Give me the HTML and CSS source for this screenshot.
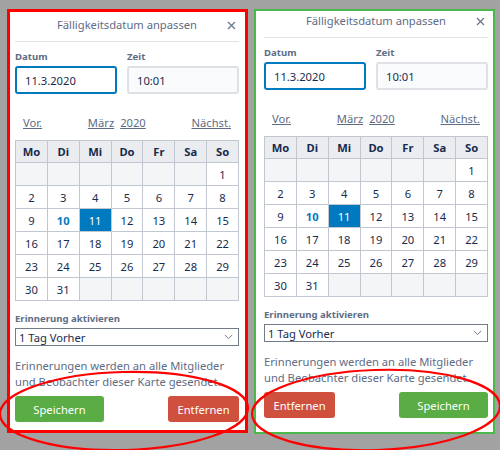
FILE: index.html
```html
<!DOCTYPE html>
<html lang="de">
<head>
<meta charset="utf-8">
<title>Fälligkeitsdatum anpassen</title>
<link rel="stylesheet" href="styles.css">
</head>
<body>
<div class="stage">
  <section class="pop pop-red">
    <header class="pop-head">
      <span class="pop-title">Fälligkeitsdatum anpassen</span>
      <span class="pop-close"><svg width="9" height="9" viewBox="0 0 9 9"><path d="M1 1L8 8M8 1L1 8" stroke="#6b778c" stroke-width="1.3" fill="none"/></svg></span>
    </header>
    <div class="dt">
      <div class="field"><div class="lbl">Datum</div><div class="inp inp-focus">11.3.2020</div></div>
      <div class="field"><div class="lbl">Zeit</div><div class="inp">10:01</div></div>
    </div>
    <div class="cal-nav"><span class="lnk">Vor.</span><span class="mid"><span class="lnk">März</span><span class="lnk">2020</span></span><span class="lnk">Nächst.</span></div>
    <div class="cal">
      <div class="c hd">Mo</div><div class="c hd">Di</div><div class="c hd">Mi</div><div class="c hd">Do</div><div class="c hd">Fr</div><div class="c hd">Sa</div><div class="c hd">So</div>
      <div class="c empty"></div><div class="c empty"></div><div class="c empty"></div><div class="c empty"></div><div class="c empty"></div><div class="c empty"></div><div class="c">1</div>
      <div class="c">2</div><div class="c">3</div><div class="c">4</div><div class="c">5</div><div class="c">6</div><div class="c">7</div><div class="c">8</div>
      <div class="c">9</div><div class="c today">10</div><div class="c picked">11</div><div class="c">12</div><div class="c">13</div><div class="c">14</div><div class="c">15</div>
      <div class="c">16</div><div class="c">17</div><div class="c">18</div><div class="c">19</div><div class="c">20</div><div class="c">21</div><div class="c">22</div>
      <div class="c">23</div><div class="c">24</div><div class="c">25</div><div class="c">26</div><div class="c">27</div><div class="c">28</div><div class="c">29</div>
      <div class="c">30</div><div class="c">31</div><div class="c empty"></div><div class="c empty"></div><div class="c empty"></div><div class="c empty"></div><div class="c empty"></div>
    </div>
    <div class="lbl rem-lbl">Erinnerung aktivieren</div>
    <div class="select"><span>1 Tag Vorher</span><svg width="9" height="6" viewBox="0 0 9 6"><path d="M0.8 1L4.5 4.6L8.2 1" stroke="#6b778c" stroke-width="1" fill="none"/></svg></div>
    <p class="note">Erinnerungen werden an alle Mitglieder<br>und Beobachter dieser Karte gesendet.</p>
    <div class="actions">
      <button class="btn btn-save">Speichern</button>
      <button class="btn btn-del">Entfernen</button>
    </div>
  </section>

  <section class="pop pop-green">
    <header class="pop-head">
      <span class="pop-title">Fälligkeitsdatum anpassen</span>
      <span class="pop-close"><svg width="9" height="9" viewBox="0 0 9 9"><path d="M1 1L8 8M8 1L1 8" stroke="#6b778c" stroke-width="1.3" fill="none"/></svg></span>
    </header>
    <div class="dt">
      <div class="field"><div class="lbl">Datum</div><div class="inp inp-focus">11.3.2020</div></div>
      <div class="field"><div class="lbl">Zeit</div><div class="inp">10:01</div></div>
    </div>
    <div class="cal-nav"><span class="lnk">Vor.</span><span class="mid"><span class="lnk">März</span><span class="lnk">2020</span></span><span class="lnk">Nächst.</span></div>
    <div class="cal">
      <div class="c hd">Mo</div><div class="c hd">Di</div><div class="c hd">Mi</div><div class="c hd">Do</div><div class="c hd">Fr</div><div class="c hd">Sa</div><div class="c hd">So</div>
      <div class="c empty"></div><div class="c empty"></div><div class="c empty"></div><div class="c empty"></div><div class="c empty"></div><div class="c empty"></div><div class="c">1</div>
      <div class="c">2</div><div class="c">3</div><div class="c">4</div><div class="c">5</div><div class="c">6</div><div class="c">7</div><div class="c">8</div>
      <div class="c">9</div><div class="c today">10</div><div class="c picked">11</div><div class="c">12</div><div class="c">13</div><div class="c">14</div><div class="c">15</div>
      <div class="c">16</div><div class="c">17</div><div class="c">18</div><div class="c">19</div><div class="c">20</div><div class="c">21</div><div class="c">22</div>
      <div class="c">23</div><div class="c">24</div><div class="c">25</div><div class="c">26</div><div class="c">27</div><div class="c">28</div><div class="c">29</div>
      <div class="c">30</div><div class="c">31</div><div class="c empty"></div><div class="c empty"></div><div class="c empty"></div><div class="c empty"></div><div class="c empty"></div>
    </div>
    <div class="lbl rem-lbl">Erinnerung aktivieren</div>
    <div class="select"><span>1 Tag Vorher</span><svg width="9" height="6" viewBox="0 0 9 6"><path d="M0.8 1L4.5 4.6L8.2 1" stroke="#6b778c" stroke-width="1" fill="none"/></svg></div>
    <p class="note">Erinnerungen werden an alle Mitglieder<br>und Beobachter dieser Karte gesendet.</p>
    <div class="actions">
      <button class="btn btn-del">Entfernen</button>
      <button class="btn btn-save">Speichern</button>
    </div>
  </section>
</div>
<svg class="marks" width="500" height="450" viewBox="0 0 500 450">
  <ellipse cx="124" cy="411" rx="124" ry="39" transform="rotate(-1.5 124 411)" fill="none" stroke="#ff0000" stroke-width="2.2"/>
  <ellipse cx="376" cy="410" rx="124" ry="40" transform="rotate(-2 376 410)" fill="none" stroke="#ff0000" stroke-width="2.2"/>
</svg>
</body>
</html>
```
FILE: styles.css
```css
html, body {
  margin: 0;
  padding: 0;
}
body {
  width: 500px;
  height: 450px;
  background: #a2a2a2;
  font-family: "Noto Sans", "Liberation Sans", sans-serif;
  font-size: 11.2px;
  color: #172b4d;
  position: relative;
  overflow: hidden;
}
.stage {
  display: flex;
  align-items: flex-start;
  gap: 6px;
  padding: 9px 0 0 7px;
}
.pop {
  width: 241px;
  box-sizing: border-box;
  background: #fff;
  display: flex;
  flex-direction: column;
}
.pop-red {
  height: 424px;
  border: 3px solid #ff0000;
  padding: 3px 6px 0 5px;
}
.pop-green {
  height: 425px;
  border: 2px solid #4cb84a;
  padding: 0 5px 0 8px;
}
.pop-head {
  display: grid;
  grid-template-columns: 1fr auto 1fr;
  align-items: center;
  line-height: 20px;
  padding-bottom: 6px;
  border-bottom: 1px solid #dfe1e6;
}
.pop-title {
  grid-column: 2;
  color: #5e6c84;
  white-space: nowrap;
}
.pop-close {
  grid-column: 3;
  justify-self: end;
  margin-right: 3px;
  display: flex;
}
.dt {
  display: grid;
  grid-template-columns: 102px 1fr;
  column-gap: 10px;
  margin-top: 8px;
}
.lbl {
  font-size: 9.6px;
  font-weight: 700;
  line-height: 14px;
  color: #5e6c84;
  margin-bottom: 2px;
}
.inp {
  height: 28px;
  box-sizing: border-box;
  border: 2px solid #dfe1e6;
  background: #fafbfc;
  border-radius: 3px;
  padding: 0 8px;
  display: flex;
  align-items: center;
}
.inp-focus {
  border-color: #0079bf;
  background: #fff;
}
.cal-nav {
  display: flex;
  justify-content: space-between;
  padding: 0 8px;
  margin-top: 21px;
  line-height: 16px;
  color: #5e6c84;
}
.mid {
  display: flex;
  gap: 6px;
}
.lnk {
  text-decoration: underline;
}
.cal {
  margin-top: 9px;
  width: 224px;
  box-sizing: border-box;
  display: grid;
  grid-template-columns: repeat(7, 1fr);
  grid-template-rows: 22px repeat(6, 23px);
  border-top: 1px solid #c1c7d0;
  border-left: 1px solid #c1c7d0;
}
.c {
  border-right: 1px solid #c1c7d0;
  border-bottom: 1px solid #c1c7d0;
  display: flex;
  align-items: center;
  justify-content: center;
}
.hd {
  background: #ebecf0;
  font-weight: 700;
}
.empty {
  background: #f4f5f7;
}
.today {
  color: #0079bf;
  font-weight: 700;
}
.picked {
  background: #0079bf;
  color: #fff;
}
.rem-lbl {
  margin-top: 11px;
}
.select {
  height: 18px;
  box-sizing: border-box;
  border: 1px solid #737b86;
  display: flex;
  align-items: center;
  justify-content: space-between;
  padding: 0 5px 0 3px;
}
.note {
  margin: 12px 0 0;
  line-height: 16px;
  color: #5e6c84;
  white-space: nowrap;
}
.actions {
  display: flex;
  justify-content: space-between;
  margin-top: 6px;
}
.btn {
  height: 26px;
  border: 0;
  border-radius: 3px;
  color: #fff;
  font: inherit;
  padding: 0;
}
.btn-save {
  width: 89px;
  background: #5aac44;
}
.btn-del {
  width: 71px;
  background: #cf513d;
}
.marks {
  position: absolute;
  left: 0;
  top: 0;
  pointer-events: none;
}
```
